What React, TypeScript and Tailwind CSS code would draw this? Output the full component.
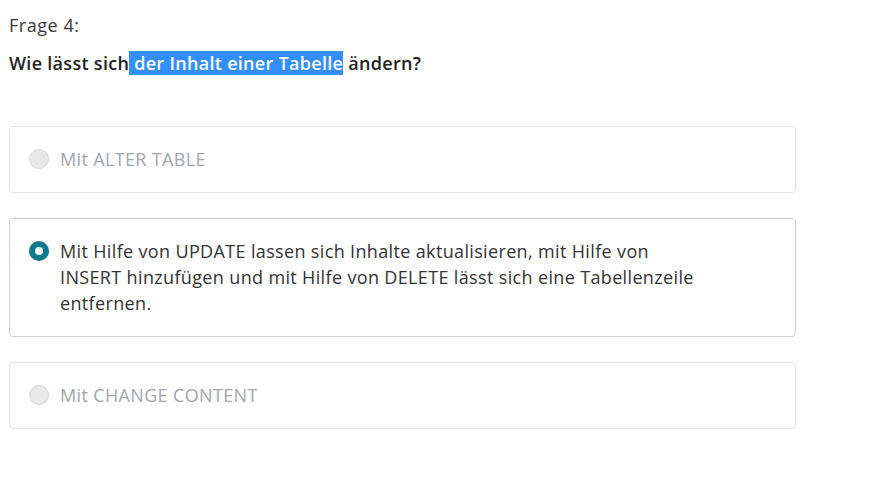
import React from "react";

function Radio({ checked }: { checked: boolean }) {
  if (checked) {
    return (
      <span className="mt-[3px] block h-[20px] w-[20px] shrink-0 rounded-full border-[6px] border-[#0b7a8c] bg-white" />
    );
  }
  return (
    <span className="mt-[3px] block h-[20px] w-[20px] shrink-0 rounded-full border border-[#d6d6d6] bg-[#e8e8e8]" />
  );
}

function Option({ checked, children }: { checked: boolean; children: React.ReactNode }) {
  return (
    <div
      className={
        "flex w-[787px] items-start gap-[11px] rounded-[4px] border bg-white px-[19px] pt-[19px] pb-[20px] " +
        (checked ? "border-[#cfcfcf]" : "border-[#e4e4e4]")
      }
    >
      <Radio checked={checked} />
      <div
        className={
          "w-[645px] text-[18px] leading-[26px] tracking-[0.35px] " +
          (checked ? "text-[#333333]" : "text-[#a2a5ae]")
        }
      >
        {children}
      </div>
    </div>
  );
}

export default function App() {
  return (
    <div
      className="min-h-screen bg-white px-[9px] pt-[13px]"
      style={{ fontFamily: '"Open Sans", "Noto Sans", sans-serif' }}
    >
      <div className="text-[18px] leading-[24px] tracking-[0.55px] text-[#3a3a3a]">Frage 4:</div>
      <div className="mt-[14px] text-[18px] font-semibold leading-[24px] tracking-[0.3px] text-[#222222]">
        Wie lässt sich
        <span className="bg-[#338fff] text-white"> der Inhalt einer Tabelle</span> ändern?
      </div>
      <div className="mt-[51px] flex flex-col gap-[25px]">
        <Option checked={false}>Mit ALTER TABLE</Option>
        <Option checked={true}>
          Mit Hilfe von UPDATE lassen sich Inhalte aktualisieren, mit Hilfe von INSERT hinzufügen und mit Hilfe
          von DELETE lässt sich eine Tabellenzeile entfernen.
        </Option>
        <Option checked={false}>Mit CHANGE CONTENT</Option>
      </div>
    </div>
  );
}
